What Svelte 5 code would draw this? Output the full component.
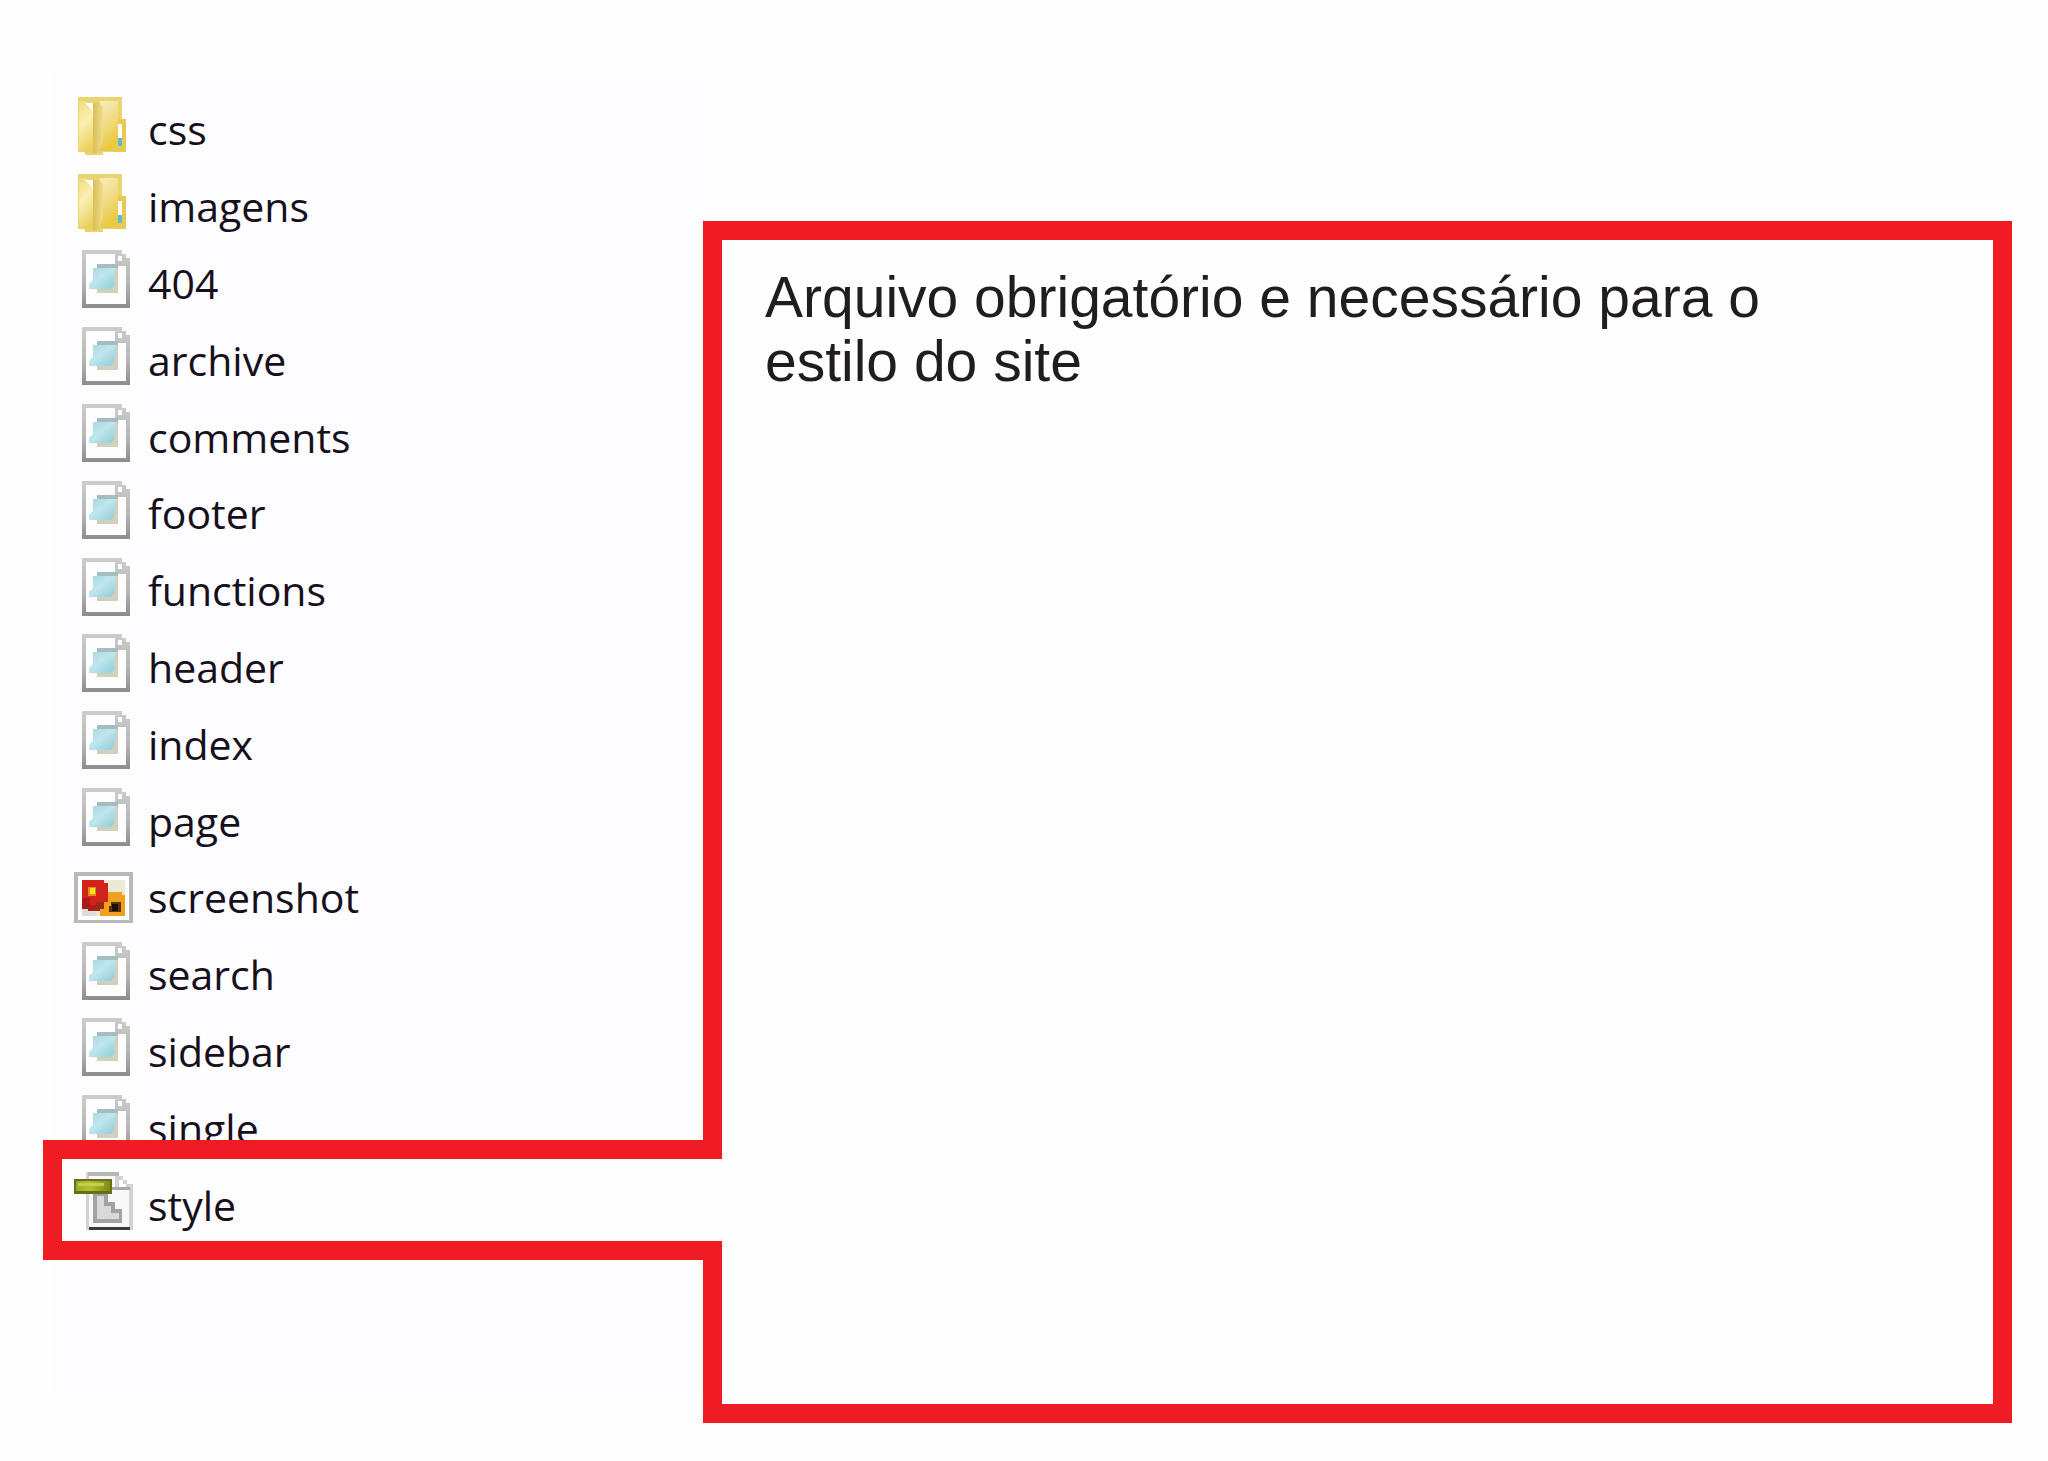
<script lang="ts">
  type Kind = 'folder' | 'document' | 'image' | 'stylesheet';

  interface Entry {
    name: string;
    kind: Kind;
  }

  const entries: Entry[] = [
    { name: 'css', kind: 'folder' },
    { name: 'imagens', kind: 'folder' },
    { name: '404', kind: 'document' },
    { name: 'archive', kind: 'document' },
    { name: 'comments', kind: 'document' },
    { name: 'footer', kind: 'document' },
    { name: 'functions', kind: 'document' },
    { name: 'header', kind: 'document' },
    { name: 'index', kind: 'document' },
    { name: 'page', kind: 'document' },
    { name: 'screenshot', kind: 'image' },
    { name: 'search', kind: 'document' },
    { name: 'sidebar', kind: 'document' },
    { name: 'single', kind: 'document' },
    { name: 'style', kind: 'stylesheet' },
  ];

  const highlighted = 'style';
</script>

<svg class="gradients" aria-hidden="true">
  <defs>
    <linearGradient id="folder-back" x1="0" y1="0" x2="0.3" y2="1">
      <stop offset="0" stop-color="#f8edba" />
      <stop offset="0.5" stop-color="#f0dc85" />
      <stop offset="1" stop-color="#eac840" />
    </linearGradient>
    <linearGradient id="folder-leaf" x1="0" y1="0" x2="0.3" y2="1">
      <stop offset="0" stop-color="#f0db7c" />
      <stop offset="0.45" stop-color="#fbf0b4" />
      <stop offset="1" stop-color="#ead05c" />
    </linearGradient>
    <linearGradient id="folder-spine" x1="0" y1="0" x2="1" y2="0">
      <stop offset="0" stop-color="#d9bf55" />
      <stop offset="1" stop-color="#efdc8e" />
    </linearGradient>
    <linearGradient id="page-edge" x1="0" y1="0" x2="0" y2="1">
      <stop offset="0" stop-color="#cdcdcd" />
      <stop offset="0.6" stop-color="#b4b4b4" />
      <stop offset="1" stop-color="#8c8c8c" />
    </linearGradient>
    <linearGradient id="page-note" x1="0" y1="0" x2="1" y2="1">
      <stop offset="0" stop-color="#a6d8dd" />
      <stop offset="0.45" stop-color="#bfe6ee" />
      <stop offset="1" stop-color="#8ccbd8" />
    </linearGradient>
    <linearGradient id="style-bar" x1="0" y1="0" x2="1" y2="0">
      <stop offset="0" stop-color="#9aa52c" />
      <stop offset="0.4" stop-color="#b3c02f" />
      <stop offset="1" stop-color="#7f8c15" />
    </linearGradient>
  </defs>
</svg>

<main class="page">
  <ul class="files">
    {#each entries as entry (entry.name)}
      <li class="file" class:highlighted={entry.name === highlighted}>
        <svg class="icon" viewBox="0 0 59 59" aria-hidden="true">
          {#if entry.kind === 'folder'}
            <path d="M4 0H48V22H52V55H29V58H11V55H4Z" fill="#e9d473" />
            <path d="M26 4H44V54H26Z" fill="url(#folder-back)" />
            <path d="M44 22H52V55H40V46H44Z" fill="#e9c94e" />
            <path d="M5 4H12L22 13V57H14L5 53Z" fill="url(#folder-leaf)" />
            <path d="M11 6H19V15L15 10Z" fill="#fffdf4" />
            <path d="M19 6H25L29 10V42L25 56H19Z" fill="url(#folder-spine)" />
            <path d="M44 27H48V41H44Z" fill="#fffef6" />
            <path d="M44 41H48V49H44Z" fill="#58bfd0" />
          {:else if entry.kind === 'document'}
            <path d="M8 0H48V4H52V8H56V58H8Z" fill="url(#page-edge)" />
            <path d="M12 4H41V16H52V54H12Z" fill="#fdfdfd" />
            <path d="M44 6H48V11H44Z" fill="#fff" />
            <path d="M23 14H44V43H23Z" fill="#d3cfbe" />
            <path d="M23 14H44V18H23Z" fill="#a3bdc0" />
            <path d="M19 18H42L40 35L37 39H15V34L19 30Z" fill="url(#page-note)" />
          {:else if entry.kind === 'image'}
            <path d="M0 7H59V58H0Z" fill="#b9b9b9" />
            <path d="M4 11H55V55H4Z" fill="#fefefe" />
            <path d="M8 15H51V51H8Z" fill="#ece9d8" />
            <path d="M8 15H30V18H34V37H30V44H8Z" fill="#d3221c" />
            <path d="M8 33H16V40H26V46H8Z" fill="#a81e16" />
            <path d="M22 37H33V45H22Z" fill="#9c2a12" />
            <path d="M14 22H22V31H14Z" fill="#e88a14" />
            <path d="M16 23H21V29H16Z" fill="#f5e22a" />
            <path d="M34 27H48V30H51V51H26V44H30V37H34Z" fill="#f0a01c" />
            <path d="M37 37H47V47H35V41H37Z" fill="#5a3508" />
            <path d="M38 39H44V46H38Z" fill="#19120c" />
            <path d="M8 44H14V47H22V51H8Z" fill="#dedcd6" />
          {:else}
            <path d="M12 0H45V4H49V8H53V12H59V58H12Z" fill="#d3d3d3" />
            <path d="M15 4H41V18H55V55H15Z" fill="#f8f8f8" />
            <path d="M14 0H45V4H14Z" fill="#b8b8b8" />
            <path d="M45 8H49V12H52V15H45Z" fill="#fff" />
            <path d="M38 15H56V18H38Z" fill="#a9a9a9" />
            <path d="M19 21H34V30H41V37H48V51H19Z" fill="#a3a3a3" />
            <path d="M23 24H30V34H37V41H45V47H23Z" fill="#d9d9d9" />
            <path d="M15 55H56V58H15Z" fill="#343c3c" />
            <path d="M0 7H38V22H0Z" fill="#667014" />
            <path d="M2 9H36V19H2Z" fill="url(#style-bar)" />
            <path d="M4 11H30V14H4Z" fill="#c3cf45" />
          {/if}
        </svg>
        <span class="name">{entry.name}</span>
      </li>
    {/each}
  </ul>

  <section class="callout">
    <p>Arquivo obrigatório e necessário para o estilo do site</p>
  </section>
</main>

<style>
  :global(body) {
    margin: 0;
    background: #fefefe;
  }

  .gradients {
    position: absolute;
    width: 0;
    height: 0;
  }

  .page {
    --red: #ef1d23;
    --line: 19px;

    display: grid;
    grid-template-columns: 651px 1fr;
    box-sizing: border-box;
    min-height: 100vh;
    padding: 72px 36px 38px 52px;
  }

  .files {
    display: grid;
    grid-auto-rows: 1fr;
    margin: 0 -8px 30px 0;
    padding: 16px 8px 153px 0;
    background: #fdfcfe;
    list-style: none;
  }

  .file {
    position: relative;
    display: flex;
    align-items: center;
    gap: 15px;
    padding-left: 22px;
  }

  .icon {
    position: relative;
    flex: none;
    width: 59px;
    height: 59px;
  }

  .name {
    position: relative;
    padding-top: 6px;
    color: #17101c;
    font-family: 'Open Sans', 'Noto Sans', sans-serif;
    font-size: 41px;
    line-height: 56px;
  }

  .highlighted {
    z-index: 1;
  }

  /* Tab that joins the highlighted row to the callout */
  .highlighted::before {
    position: absolute;
    inset: -23px -19px -20px -9px;
    border: var(--line) solid var(--red);
    border-right: 0;
    background: #fefefe;
    content: '';
  }

  .callout {
    margin-top: 149px;
    padding: 25px 160px 25px 43px;
    border: var(--line) solid var(--red);
    background: #fefefe;
  }

  .callout p {
    margin: 0;
    color: #201c20;
    font-family: 'Liberation Sans', Arial, sans-serif;
    font-size: 57px;
    line-height: 64px;
  }
</style>
